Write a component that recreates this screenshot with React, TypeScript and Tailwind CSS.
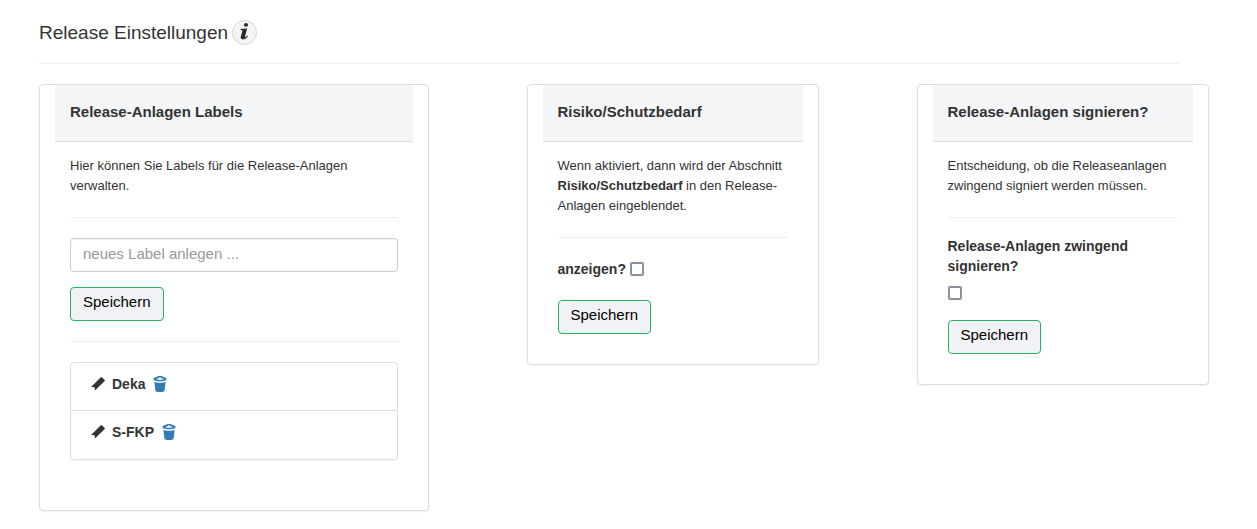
import React from 'react';

interface CardProps {
  title: string;
  className: string;
  children: React.ReactNode;
}

const Card: React.FC<CardProps> = ({ title, className, children }) => (
  <section className={`bg-white border border-[#ddd] rounded px-[15px] shadow-xs ${className}`}>
    <header className="bg-[#f4f5f7] border-b border-[#ddd] rounded-t-[3px] px-[15px] pt-[17px] pb-[19px]">
      <h2 className="text-[15px] leading-5 font-bold">{title}</h2>
    </header>
    <div className="px-[15px] pt-[14px]">{children}</div>
  </section>
);

const Divider = () => <hr className="border-[#eee] mt-[21px] mb-5" />;

const SaveButton = () => (
  <button
    type="submit"
    className="block h-[34px] px-3 pb-1 text-[15px] leading-5 text-black bg-[#f0f2f5] border border-[#28b15f] rounded"
  >
    Speichern
  </button>
);

const Checkbox = ({ id, className }: { id: string; className: string }) => (
  <input
    id={id}
    type="checkbox"
    className={`appearance-none w-[14px] h-[14px] bg-white checked:bg-[#0060df] border-2 border-[#8f8f9d] rounded-xs ${className}`}
  />
);

const InfoIcon = () => (
  <svg className="w-[25px] h-[25px]" viewBox="0 0 25 25" aria-hidden="true">
    <circle cx="12.5" cy="12.5" r="12" fill="#f4f4f4" stroke="#d5d5d5" />
    <ellipse cx="14" cy="4.9" rx="2.1" ry="1.8" fill="#2b2b2b" />
    <path
      d="M8.6 9 L15.2 8.4 L13 16.4 C12.7 17.6 13.3 17.5 15.2 15.6 L15.9 16.3 C14 18.6 12.5 19.4 10.9 19.4 C9 19.4 8.3 18.3 8.8 16.6 L10.4 11 C10.6 10.2 10.2 10.1 8.4 10.1 Z"
      fill="#2b2b2b"
    />
  </svg>
);

const LabelIcon = () => (
  <svg className="w-[14px] h-[14px]" viewBox="0 0 14 14" fill="#333" aria-hidden="true">
    <path d="M9.6 0.4 Q10.4 -0.2 11.1 0.4 L13.5 2.8 Q14.2 3.5 13.5 4.2 L3.9 13.6 L3.7 10.8 L2.9 10 L0 9.9 Z" />
  </svg>
);

const TrashIcon = () => (
  <svg className="w-[14px] h-4" viewBox="0 0 14 16" fill="#337ab7" aria-hidden="true">
    <path
      fillRule="evenodd"
      d="M0.5 3.1 C0.5 1.8 3 0.9 4.9 0.6 L5.3 0 H8.7 L9.1 0.6 C11 0.9 13.5 1.8 13.5 3.1 V3.5 C13.5 4.7 10.3 5.3 7 5.3 C3.7 5.3 0.5 4.7 0.5 3.5 Z M3.2 3.3 C5.2 4 8.8 4 10.8 3.3 L9.2 2.3 L8.6 2.7 L7.9 1.4 H6.1 L5.4 2.7 L4.8 2.3 Z"
    />
    <path d="M1.4 6 C4.3 6.9 9.7 6.9 12.6 6 L11.6 14.5 C11.3 15.5 9.3 16 7 16 C4.7 16 2.7 15.5 2.4 14.5 Z" />
  </svg>
);

const labels = ['Deka', 'S-FKP'];

const App: React.FC = () => {
  return (
    <main className="pl-[39px] pr-12 pt-5 pb-[18px] font-['Liberation_Sans',Arial,sans-serif] text-[#333] bg-white">
      <div className="flex items-center gap-1 pb-[18px] mr-[30px] mb-5 border-b border-[#eee]">
        <h1 className="text-[19px] leading-[25px]">Release Einstellungen</h1>
        <button type="button" aria-label="Info">
          <InfoIcon />
        </button>
      </div>

      <div className="grid grid-cols-12 items-start">
        {/* Labels */}
        <Card title="Release-Anlagen Labels" className="col-span-4 pb-[50px]">
          <p className="text-[13px] leading-5">
            Hier können Sie Labels für die Release-Anlagen
            <br />
            verwalten.
          </p>
          <Divider />
          <form>
            <input
              type="text"
              aria-label="neues Label anlegen"
              placeholder="neues Label anlegen ..."
              className="block w-full h-[34px] px-3 pb-1 mb-[15px] text-[15px] leading-5 border border-[#ccc] rounded inset-shadow-2xs placeholder:text-[#999]"
            />
            <SaveButton />
          </form>
          <hr className="border-[#eee] my-5" />
          <ul className="border border-[#ddd] rounded divide-y divide-[#ddd] shadow-xs">
            {labels.map((label) => (
              <li key={label} className="flex items-start h-12 px-5 pt-[11px]">
                <div className="flex items-center">
                  <LabelIcon />
                  <span className="ml-[7px] mr-2 text-sm leading-5 font-bold">{label}</span>
                  <a href="#" aria-label={`${label} löschen`}>
                    <TrashIcon />
                  </a>
                </div>
              </li>
            ))}
          </ul>
        </Card>

        {/* Risiko */}
        <Card title="Risiko/Schutzbedarf" className="col-start-6 col-span-3 pb-[30px]">
          <p className="text-[13px] leading-5">
            Wenn aktiviert, dann wird der Abschnitt <strong>Risiko/Schutzbedarf</strong> in den Release-Anlagen
            eingeblendet.
          </p>
          <Divider />
          <form>
            <div className="flex items-center gap-1 pt-px mb-[21px]">
              <label htmlFor="risiko" className="text-sm leading-5 font-bold">anzeigen?</label>
              <Checkbox id="risiko" className="" />
            </div>
            <SaveButton />
          </form>
        </Card>

        {/* Signatur */}
        <Card title="Release-Anlagen signieren?" className="col-start-10 col-span-3 pb-[30px]">
          <p className="text-[13px] leading-5">
            Entscheidung, ob die Releaseanlagen zwingend signiert werden müssen.
          </p>
          <hr className="border-[#eee] mt-[21px] mb-[18px]" />
          <form>
            <label htmlFor="signieren" className="block text-sm leading-5 font-bold">
              Release-Anlagen zwingend signieren?
            </label>
            <Checkbox id="signieren" className="block mt-[10px] mb-5" />
            <SaveButton />
          </form>
        </Card>
      </div>
    </main>
  );
};

export default App;
